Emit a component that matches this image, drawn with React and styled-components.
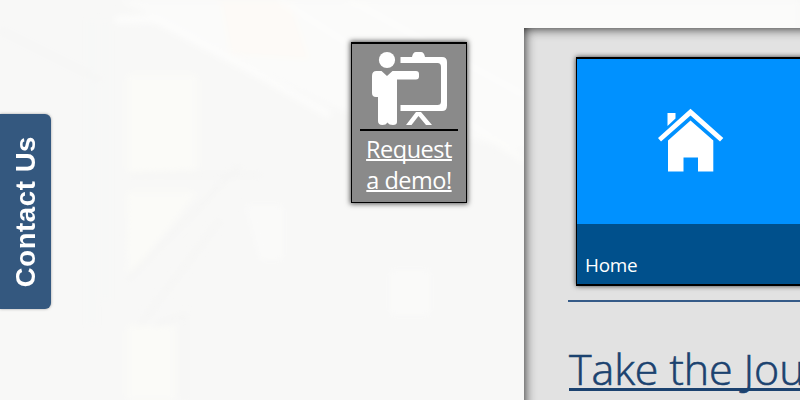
import React from "react";
import styled, { createGlobalStyle } from "styled-components";

const GlobalStyle = createGlobalStyle`
  *, *::before, *::after { box-sizing: border-box; }
  body { margin: 0; overflow: hidden; }
`;

const Page = styled.div`
  position: relative;
  isolation: isolate;
  display: grid;
  grid-template-columns: 351px 116px 57px 1fr;
  width: 100vw;
  height: 400px;
  overflow: hidden;
  background: #f8f8f7;
  font-family: "Open Sans", "Noto Sans", sans-serif;
`;

const Backdrop = styled.svg`
  position: absolute;
  inset: 0;
  z-index: -1;
`;

const ContactTab = styled.a`
  display: flex;
  align-items: center;
  justify-content: center;
  width: 51px;
  height: 195px;
  margin-top: 114px;
  border-radius: 0 6px 6px 0;
  background: #34587f;
  box-shadow: 0 0 3px rgba(0, 0, 0, 0.35);
`;

const ContactLabel = styled.span`
  margin-top: 1px;
  writing-mode: vertical-rl;
  transform: rotate(180deg);
  white-space: nowrap;
  font: bold 27.5px/30px "Liberation Sans", Arial, sans-serif;
  letter-spacing: 0.6px;
  color: #fff;
`;

const DemoCard = styled.div`
  display: flex;
  flex-direction: column;
  align-items: center;
  height: 161px;
  margin-top: 42px;
  padding-top: 7px;
  border: 1px solid #000;
  border-top-width: 2px;
  background: #8a8a8a;
  box-shadow: 0 0 5px 1px rgba(0, 0, 0, 0.65);
`;

const Divider = styled.div`
  flex: none;
  width: 98px;
  height: 2px;
  margin-top: 3px;
  background: #000;
`;

const DemoLink = styled.a`
  display: block;
  margin-top: 3px;
  font-size: 23.5px;
  line-height: 31px;
  letter-spacing: -0.5px;
  text-align: center;
  white-space: nowrap;
  color: #fff;
  text-decoration: underline;
  text-decoration-thickness: 1.5px;
  text-underline-offset: 1px;
  text-decoration-skip-ink: none;
`;

const Panel = styled.main`
  grid-column: 4;
  height: 420px;
  margin-top: 28px;
  margin-right: -20px;
  padding: 29px 0 0 44px;
  background: #e2e2e2;
  box-shadow: inset 0 0 12px rgba(0, 0, 0, 0.9);
`;

const Tile = styled.a`
  display: flex;
  flex-direction: column;
  width: 260px;
  height: 229px;
  margin-left: 8px;
  border: 2px solid #000;
  border-left-width: 1.5px;
  background: #0091ff;
  box-shadow: 0 0 5px rgba(0, 0, 0, 0.75);
`;

const TileArt = styled.div`
  flex: 1;
  padding: 49px 0 0 81px;
`;

const TileCaption = styled.div`
  height: 60px;
  padding: 26px 8px 0;
  background: #00508c;
  color: #fff;
  font-size: 18.9px;
  line-height: 30px;
  letter-spacing: -0.3px;
`;

const Rule = styled.div`
  height: 2px;
  margin-top: 14px;
  background: #355b88;
`;

const Heading = styled.h1`
  width: 500px;
  margin: 37px 0 0 1px;
  font-size: 43px;
  line-height: 60px;
  font-weight: 300;
  letter-spacing: -0.1px;
  white-space: nowrap;
  color: #1b426f;
  -webkit-text-stroke: 0.6px #1b426f;
  text-decoration: underline;
  text-decoration-thickness: 3px;
  text-underline-offset: 2.5px;
  text-decoration-skip-ink: none;
`;

const PresenterArt = styled.svg`
  flex: none;
  margin-left: 2px;
`;

function PresenterIcon() {
  return (
    <PresenterArt width="76" height="75" viewBox="0 0 76 75" fill="#fff">
      <circle cx="15" cy="9" r="8.1" />
      <path d="M4.500 20H9.500L15 25L20.500 20H44Q47 20 47 23V25.500Q47 28.500 44 28.500H25V71Q25 74 21 74Q17 74 15.500 71.500Q14 74 10.500 74Q6 74 6 70V46H4Q0 46 0 42V25Q0 20 4.500 20Z" />
      <path d="M28.500 6H40Q41 1 44 1H49Q52 1 53 6H70Q75 6 75 11V54.500Q75 60 70 60H28.500V54H65.500Q69 54 69 50.500V16Q69 12 65.500 12H28.500Z" />
      <path d="M44 61H49L60 74H54L46.500 65L39.500 74H34Z" />
    </PresenterArt>
  );
}

function HomeIcon() {
  return (
    <svg width="66" height="65" viewBox="0 0 66 65" fill="#fff">
      <path d="M9.500 5H17.500V10.500L9.500 18Z" />
      <path d="M32.500 0.800L65.300 30L62 33.500L32.500 7.500L3 33.500L0 30Z" />
      <path d="M32.500 12.500L55.300 32.500V63.500H40V49.500H25.500V63.500H10V32.500Z" />
    </svg>
  );
}

function CityBackdrop() {
  return (
    <Backdrop width="800" height="400" viewBox="0 0 800 400" fill="none">
      <defs>
        <filter id="haze" x="-10%" y="-10%" width="120%" height="120%">
          <feGaussianBlur stdDeviation="3" />
        </filter>
      </defs>
      <g filter="url(#haze)">
        <path d="M120 0H800V150H520L340 110Z" fill="#fbfbfa" />
        <path d="M127 75H197V170L127 173ZM127 192H197L128 280ZM127 326H175V400H127Z" fill="#fbfbf8" />
        <path d="M220 0H290L310 60L230 55Z" fill="#fdfaf7" />
        <path d="M115 20L155 19L260 75L330 115" stroke="#fdfdfc" strokeWidth="7" />
        <path d="M0 30L100 80M127 280L240 165M130 175H260M140 325L220 220M155 325L185 315V400" stroke="#f5f5f4" strokeWidth="4" />
        <path d="M245 205H283V260H260ZM390 270H430V315H390Z" fill="#fafaf9" />
        <path d="M280 0L420 90L524 160M350 0L524 95" stroke="#fdfdfb" strokeWidth="5" />
        <path d="M92 20V325M105 20V300" stroke="#f6f8f7" strokeWidth="3" />
      </g>
    </Backdrop>
  );
}

export default function App() {
  return (
    <>
      <GlobalStyle />
      <Page>
        <CityBackdrop />
        <ContactTab>
          <ContactLabel>Contact Us</ContactLabel>
        </ContactTab>
        <DemoCard>
          <PresenterIcon />
          <Divider />
          <DemoLink>
            Request
            <br />a demo!
          </DemoLink>
        </DemoCard>
        <Panel>
          <Tile>
            <TileArt>
              <HomeIcon />
            </TileArt>
            <TileCaption>Home</TileCaption>
          </Tile>
          <Rule />
          <Heading>Take the Journey</Heading>
        </Panel>
      </Page>
    </>
  );
}
